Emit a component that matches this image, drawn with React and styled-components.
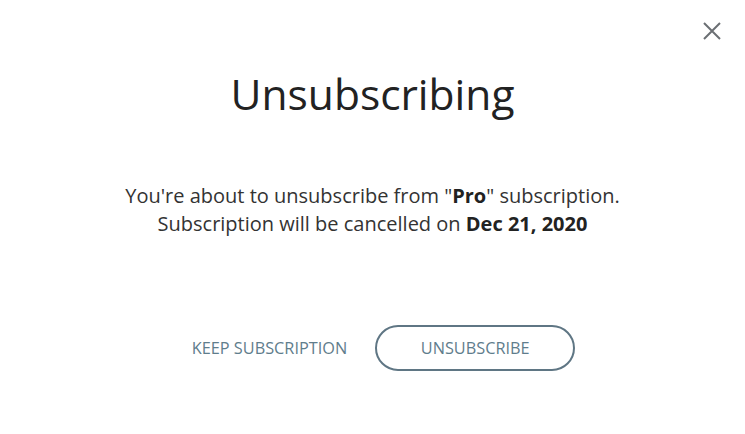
import React from 'react'
import styled, { createGlobalStyle } from 'styled-components';

const Global = createGlobalStyle`
html, body {
  margin: 0;
  padding: 0;
  background: #fff;
}
body {
  font-family: "Open Sans", "Noto Sans", sans-serif;
}
`
const Dialog = styled.div`
position: relative;
width: 745px;
height: 434px;
box-sizing: border-box;
background: #fff;
display: flex;
flex-direction: column;
align-items: center;
padding-top: 66px;
`
const Close = styled.button`
position: absolute;
top: 18px;
right: 20px;
width: 26px;
height: 26px;
padding: 0;
border: none;
background: none;
cursor: pointer;
display: flex;
align-items: center;
justify-content: center;
`
const Title = styled.h1`
margin: 0;
font-size: 42.5px;
font-weight: 400;
line-height: 56px;
color: #222;
`
const Message = styled.p`
margin: 60px 0 0;
font-size: 20px;
line-height: 28px;
color: #333;
text-align: center;
b {
  font-weight: 700;
  color: #222;
}
`
const Actions = styled.div`
margin-top: 87px;
padding-left: 22px;
display: flex;
align-items: center;
gap: 28px;
`
const TextButton = styled.button`
border: none;
background: none;
padding: 0;
font-family: inherit;
font-size: 16.3px;
color: #5f7d8c;
text-transform: uppercase;
cursor: pointer;
`
const OutlineButton = styled.button`
width: 200px;
height: 46px;
border: 2px solid #5f7684;
border-radius: 23px;
background: #fff;
font-family: inherit;
font-size: 16.3px;
color: #5f7d8c;
text-transform: uppercase;
cursor: pointer;
`

const App = () => {
    return (
        <Dialog>
            <Global />
            <Close aria-label="Close">
                <svg width="20" height="20" viewBox="0 0 20 20">
                    <path d="M2 2 L18 18 M18 2 L2 18" stroke="#6b6f73" strokeWidth="2" fill="none" />
                </svg>
            </Close>
            <Title>Unsubscribing</Title>
            <Message>
                You're about to unsubscribe from "<b>Pro</b>" subscription.<br />
                Subscription will be cancelled on <b>Dec 21, 2020</b>
            </Message>
            <Actions>
                <TextButton>Keep subscription</TextButton>
                <OutlineButton>Unsubscribe</OutlineButton>
            </Actions>
        </Dialog>
    )
}

export default App
